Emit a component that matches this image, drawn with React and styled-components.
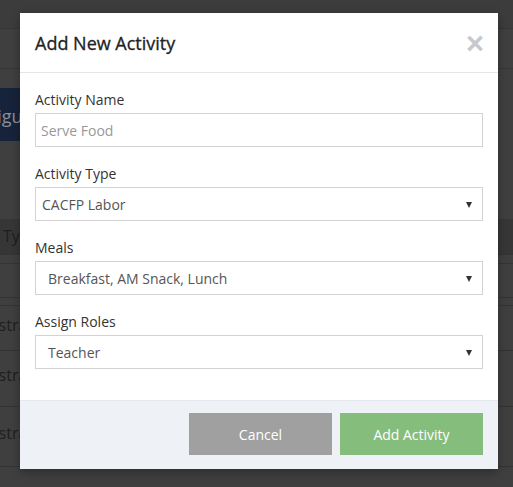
import React from 'react'
import styled, { createGlobalStyle } from 'styled-components'

const GlobalStyle = createGlobalStyle`
  html, body {
    margin: 0;
    padding: 0;
  }
  body {
    width: 513px;
    height: 487px;
    overflow: hidden;
    background: #3f3f3f;
    font-family: 'Open Sans', 'Noto Sans', sans-serif;
  }
`

const Page = styled.div`
  position: relative;
  width: 513px;
  height: 487px;
  overflow: hidden;
  background: #3f3f3f;
`

const TopBar = styled.div`
  height: 28px;
  border-bottom: 1px solid #353535;
  background: #3c3c3c;
`

const SubBar = styled.div`
  height: 39px;
  border-bottom: 1px solid #353535;
`

const Content = styled.div`
  padding: 19px 0 0 0;
`

const ConfigButton = styled.div`
  width: 120px;
  height: 53px;
  margin-left: -56px;
  background: #17233a;
  color: #8a9099;
  font-size: 18px;
  line-height: 57px;
  padding-left: 14px;
  box-sizing: border-box;
  white-space: nowrap;
`

const Table = styled.div`
  margin-top: 78px;
  margin-left: -62px;
`

const HeadRow = styled.div`
  height: 35px;
  background: #363636;
  border-bottom: 1px solid #333;
  color: #1e1e1e;
  font-size: 16px;
  line-height: 35px;
  padding-left: 65px;
`

const Spacer = styled.div`
  height: ${p => p.h}px;
  border-bottom: 1px solid #343434;
`

const Row = styled.div`
  height: ${p => p.h}px;
  border-bottom: 1px solid #333;
  color: #1e1e1e;
  font-size: 16px;
  line-height: ${p => p.h - 6}px;
  display: grid;
  grid-template-columns: 426px 1fr;
`

const Cell = styled.div`
  padding-left: 8px;
  white-space: nowrap;
  border-right: ${p => (p.divider ? '1px solid #333' : 'none')};
`

const Modal = styled.div`
  position: absolute;
  left: 20px;
  top: 13px;
  width: 478px;
  height: 456px;
  background: #fff;
  display: flex;
  flex-direction: column;
  box-shadow: 0 3px 9px rgba(0, 0, 0, 0.3);
`

const Header = styled.div`
  height: 60px;
  box-sizing: border-box;
  border-bottom: 1px solid #e5e5e5;
  display: flex;
  align-items: center;
  justify-content: space-between;
  padding: 0 15px;
`

const Title = styled.h4`
  margin: 0;
  font-size: 18px;
  font-weight: 400;
  color: #222;
  -webkit-text-stroke: 0.3px #222;
`

const Close = styled.span`
  font-family: 'Liberation Sans', Arial, sans-serif;
  font-size: 31px;
  font-weight: 700;
  color: #c8c8c8;
  line-height: 1;
  margin-top: 2px;
  margin-right: -1px;
`

const Body = styled.div`
  flex: 1;
  padding: 16px 15px 0 15px;
`

const Field = styled.div`
  margin-bottom: 16px;
`

const Label = styled.div`
  font-size: 14px;
  line-height: 20px;
  color: #333;
  padding-top: 1px;
  margin-bottom: 3px;
`

const Input = styled.div`
  height: 34px;
  box-sizing: border-box;
  border: 1px solid #d3d3d3;
  display: flex;
  align-items: center;
  justify-content: space-between;
  padding: 0 ${p => (p.select ? '10px' : '6px')} 0 ${p => p.indent}px;
  font-size: 14px;
  color: ${p => p.color || '#555'};
`

const Arrow = styled.span`
  width: 0;
  height: 0;
  border-left: 3.5px solid transparent;
  border-right: 3.5px solid transparent;
  border-top: 6px solid #333;
  margin-top: 2px;
`

const Footer = styled.div`
  height: 69px;
  box-sizing: border-box;
  background: #eef1f5;
  border-top: 1px solid #e5e8ec;
  display: flex;
  justify-content: flex-end;
  align-items: flex-start;
  gap: 8px;
  padding: 12px 15px 0 0;
`

const Button = styled.button`
  width: 143px;
  height: 42px;
  border: none;
  border-radius: 0;
  background: ${p => p.bg};
  color: #fff;
  font-family: 'Open Sans', 'Noto Sans', sans-serif;
  font-size: 14px;
  cursor: pointer;
`

const fields = [
  { label: 'Activity Name', value: 'Serve Food', color: '#999', indent: 5 },
  { label: 'Activity Type', value: 'CACFP Labor', select: true, indent: 6 },
  { label: 'Meals', value: 'Breakfast, AM Snack, Lunch', select: true, indent: 12 },
  { label: 'Assign Roles', value: 'Teacher', select: true, indent: 12 },
]

export default function App() {
  return (
    <Page>
      <GlobalStyle />
      <TopBar />
      <SubBar />
      <Content>
        <ConfigButton>Configure</ConfigButton>
        <Table>
          <HeadRow>Type</HeadRow>
          <Spacer h={8} />
          <Spacer h={33} />
          <Spacer h={7} />
          <Row h={44}>
            <Cell>Administrator</Cell>
            <Cell />
          </Row>
          <Row h={55}>
            <Cell>Administrator</Cell>
            <Cell />
          </Row>
          <Row h={59}>
            <Cell divider>Administrator</Cell>
            <Cell />
          </Row>
        </Table>
      </Content>

      <Modal>
        <Header>
          <Title>Add New Activity</Title>
          <Close>×</Close>
        </Header>
        <Body>
          {fields.map(f => (
            <Field key={f.label}>
              <Label>{f.label}</Label>
              <Input select={f.select} color={f.color} indent={f.indent}>
                <span>{f.value}</span>
                {f.select && <Arrow />}
              </Input>
            </Field>
          ))}
        </Body>
        <Footer>
          <Button bg="#a0a0a0">Cancel</Button>
          <Button bg="#85bd7d">Add Activity</Button>
        </Footer>
      </Modal>
    </Page>
  )
}
